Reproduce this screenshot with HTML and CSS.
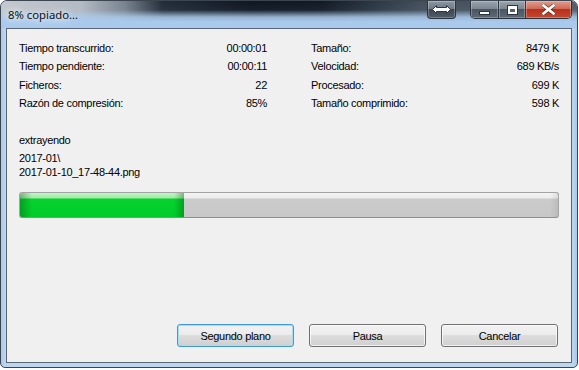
FILE: index.html
```html
<!DOCTYPE html>
<html lang="es">
<head>
<meta charset="utf-8">
<title>8% copiado...</title>
<link rel="stylesheet" href="styles.css">
</head>
<body>
<div class="window">
  <div class="titlebar">
    <span class="title">8% copiado...</span>
    <div class="cap-extra">
      <svg width="19" height="9" viewBox="0 0 19 9">
        <path d="M0.5 4.5 L4.5 0.5 L4.5 2.5 L14.5 2.5 L14.5 0.5 L18.5 4.5 L14.5 8.5 L14.5 6.5 L4.5 6.5 L4.5 8.5 Z" fill="#ffffff" stroke="#2a3540" stroke-width="1"/>
      </svg>
    </div>
    <div class="cap-group">
      <div class="cbtn cbtn-min"><span class="glyph-min"></span></div>
      <div class="cbtn cbtn-max"><span class="glyph-max"></span></div>
      <div class="cbtn cbtn-close">
        <svg width="13" height="11" viewBox="0 0 13 11">
          <path d="M1 1 L12 10 M12 1 L1 10" stroke="#3a2020" stroke-width="4.2" stroke-linecap="square" opacity="0.55"/>
          <path d="M1.5 1.5 L11.5 9.5 M11.5 1.5 L1.5 9.5" stroke="#ffffff" stroke-width="2.6" stroke-linecap="square"/>
        </svg>
      </div>
    </div>
  </div>
  <div class="client">
    <div class="stats">
      <div class="col">
        <div class="row"><span>Tiempo transcurrido:</span><span>00:00:01</span></div>
        <div class="row"><span>Tiempo pendiente:</span><span>00:00:11</span></div>
        <div class="row"><span>Ficheros:</span><span>22</span></div>
        <div class="row"><span>Razón de compresión:</span><span>85%</span></div>
      </div>
      <div class="col">
        <div class="row"><span>Tamaño:</span><span>8479 K</span></div>
        <div class="row"><span>Velocidad:</span><span>689 KB/s</span></div>
        <div class="row"><span>Procesado:</span><span>699 K</span></div>
        <div class="row"><span>Tamaño comprimido:</span><span>598 K</span></div>
      </div>
    </div>
    <div class="status">extrayendo</div>
    <div class="path">
      <div>2017-01\</div>
      <div>2017-01-10_17-48-44.png</div>
    </div>
    <div class="progress"><div class="fill" style="width:164px"></div></div>
    <div class="buttons">
      <button class="btn btn-default">Segundo plano</button>
      <button class="btn">Pausa</button>
      <button class="btn">Cancelar</button>
    </div>
  </div>
</div>
</body>
</html>
```

FILE: styles.css
```css
html, body {
  margin: 0;
  padding: 0;
  background: #ffffff;
}

.window {
  width: 578px;
  height: 368px;
  box-sizing: border-box;
  border: 1px solid #3b4651;
  border-radius: 7px 7px 5px 5px;
  background: linear-gradient(to right, #a9c8ee 0, #bdd6f0 4px, #bdd6f0 calc(100% - 4px), #a9c8ee 100%);
  padding: 0 5px 4px 5px;
  display: flex;
  flex-direction: column;
  overflow: hidden;
}

.titlebar {
  height: 27px;
  margin: 0 -5px;
  padding: 0 5px 0 6px;
  display: flex;
  align-items: flex-start;
  flex-shrink: 0;
  background:
    linear-gradient(to bottom, rgba(172, 203, 236, 0) 0px, rgba(172, 203, 236, 0.05) 9px, rgba(172, 203, 236, 0.85) 16px, rgba(170, 202, 237, 1) 21px),
    linear-gradient(to right, #c4c9ce 0, #b3bac2 80px, #76818c 125px, #222c37 162px, #0f1721 250px, #121a24 320px, #2a3541 370px, #434e5a 420px, #525d69 579px);
}

.title {
  flex: 1;
  font-family: "Noto Sans", "Open Sans", sans-serif;
  font-size: 11.3px;
  line-height: 27px;
  color: #101010;
  text-shadow: 0 0 6px #ffffff, 0 0 10px rgba(255,255,255,0.8);
  padding-left: 1px;
}

.cap-extra {
  width: 29px;
  height: 18px;
  box-sizing: border-box;
  margin-right: 14px;
  border: 1px solid #29333d;
  border-top: none;
  border-radius: 0 0 4px 4px;
  background: linear-gradient(to bottom, #8c97a2 0, #6f7a86 45%, #3d4854 50%, #4f5b67 100%);
  box-shadow: inset 0 0 0 1px rgba(255,255,255,0.25);
  display: flex;
  align-items: center;
  justify-content: center;
}

.cap-group {
  display: flex;
  height: 18px;
  border: 1px solid #29333d;
  border-top: none;
  border-radius: 0 0 5px 5px;
  overflow: hidden;
  box-sizing: border-box;
  width: 102px;
}

.cbtn {
  height: 100%;
  display: flex;
  align-items: center;
  justify-content: center;
  background: linear-gradient(to bottom, #9aa4ae 0, #7c8792 45%, #4b5662 50%, #5d6975 100%);
  box-shadow: inset 0 0 0 1px rgba(255,255,255,0.25);
}

.cbtn-min {
  width: 27px;
  border-right: 1px solid #2d3741;
}

.cbtn-max {
  width: 26px;
  border-right: 1px solid #2d3741;
}

.cbtn-close {
  flex: 1;
  background: linear-gradient(to bottom, #e19c8f 0, #d06a57 45%, #b8321d 50%, #c5472f 100%);
  box-shadow: inset 0 0 0 1px rgba(255,220,210,0.35);
}

.glyph-min {
  width: 9px;
  height: 2px;
  margin-top: 6px;
  background: #ffffff;
  border: 1px solid #2b3540;
}

.glyph-max {
  width: 5px;
  height: 3px;
  border: 2px solid #ffffff;
  border-top-width: 3px;
  outline: 1px solid #2b3540;
  background: #56616d;
}

.client {
  flex: 1;
  background: #f0f0f0;
  border: 1px solid #5b6673;
  display: flex;
  flex-direction: column;
  padding: 10px 12px 15px 12px;
  font-family: "Liberation Sans", Arial, sans-serif;
  font-size: 11px;
  letter-spacing: -0.3px;
  color: #000000;
}

.stats {
  display: grid;
  grid-template-columns: 248px 248px;
  column-gap: 44px;
}

.row {
  display: flex;
  justify-content: space-between;
  line-height: 18.4px;
  height: 18.4px;
}

.status {
  margin-top: 20px;
  line-height: 14px;
}

.path {
  margin-top: 4px;
  line-height: 14px;
}

.progress {
  margin-top: 13px;
  height: 26px;
  box-sizing: border-box;
  border: 1px solid #a4a4a4;
  border-bottom-color: #8e8e8e;
  border-radius: 3px;
  background:
    linear-gradient(to right, rgba(0,0,0,0) 0, rgba(0,0,0,0) calc(100% - 8px), rgba(0,0,0,0.07) 100%),
    linear-gradient(to bottom, #f4f4f4 0, #ececec 5px, #cbcbcb 6px, #c8c8c8 100%);
  overflow: hidden;
}

.fill {
  height: 100%;
  background:
    linear-gradient(to right, rgba(0,70,10,0.35) 0, rgba(0,70,10,0) 12px, rgba(0,70,10,0) calc(100% - 10px), rgba(0,70,10,0.35) 100%),
    linear-gradient(to bottom, #c4f4c6 0, #a0eaa6 5px, #06d22e 6px, #00cd2a 100%);
}

.buttons {
  margin-top: auto;
  display: flex;
  justify-content: flex-end;
  gap: 15px;
  padding-right: 1px;
}

.btn {
  width: 117px;
  height: 23px;
  box-sizing: border-box;
  border: 1px solid #707070;
  border-radius: 3px;
  background: linear-gradient(to bottom, #f2f2f2 0, #ebebeb 50%, #dddddd 50%, #cfcfcf 100%);
  box-shadow: inset 0 0 0 1px rgba(255,255,255,0.7);
  font-family: "Liberation Sans", Arial, sans-serif;
  font-size: 11px;
  letter-spacing: -0.3px;
  color: #000000;
  padding: 0;
}

.btn-default {
  border-color: #3c9ad8;
  box-shadow: inset 0 0 0 1px #a6dcf6;
}
```
